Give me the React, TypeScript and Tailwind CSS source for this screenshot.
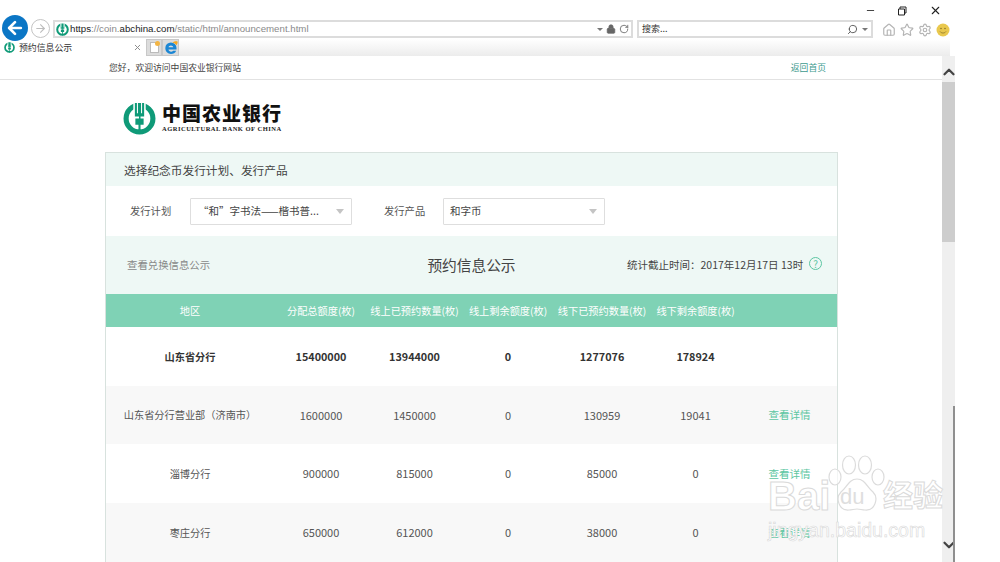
import React from "react";
import { ArrowLeft, ArrowRight, ChevronDown, ChevronUp, Home, Lock, RotateCw, Search, Settings, Star, X, Minus } from "lucide-react";

const rows = [
  { name: "山东省分行", total: "15400000", onDone: "13944000", onLeft: "0", offDone: "1277076", offLeft: "178924", bold: true },
  { name: "山东省分行营业部（济南市）", total: "1600000", onDone: "1450000", onLeft: "0", offDone: "130959", offLeft: "19041" },
  { name: "淄博分行", total: "900000", onDone: "815000", onLeft: "0", offDone: "85000", offLeft: "0" },
  { name: "枣庄分行", total: "650000", onDone: "612000", onLeft: "0", offDone: "38000", offLeft: "0" },
];

const headers = ["分配总额度(枚)", "线上已预约数量(枚)", "线上剩余额度(枚)", "线下已预约数量(枚)", "线下剩余额度(枚)"];

// ring with a white notch at the top, grain stalk in the middle
function AbcLogo({ size }: { size: number }) {
  return (
    <svg width={size} height={size} viewBox="0 0 32 32" className="shrink-0">
      <circle cx="16" cy="16" r="13" fill="none" stroke="#0f9a78" strokeWidth="5" />
      <rect x="10" y="0" width="12" height="9" fill="#fff" />
      <path d="M11.5 1h2v10h1V1h3v10h1V1h2v13h-3.500v2H20v6h-3v9h-2v-9h-3v-6h3.500v-2h-4z" fill="#0f9a78" />
    </svg>
  );
}

function IeLogo() {
  return (
    <svg width="14" height="14" viewBox="0 0 16 16">
      <path d="M1.500 9.800h12.800V8A6.300 6.300 0 0 0 1.500 8c0 4.200 3 6.800 6.500 6.800 2.700 0 4.900-1.300 5.900-3.700h-3.500c-.5.800-1.300 1.200-2.300 1.200-1.500 0-2.800-1-3-2.500zM5.200 7.200C5.400 5.800 6.500 5 7.900 5s2.500.8 2.700 2.200z" fill="#1b86d4" fillRule="evenodd" />
      <path d="M9.500 1.700c2.300-1.500 5.200-2 5.900-1 .5.900-.1 2.700-1.200 4.200-.7-1.400-2.500-2.700-4.700-3.200z" fill="#f5a823" />
    </svg>
  );
}

function BrowserChrome() {
  return (
    <div className="h-[56px] shrink-0 flex flex-col bg-white">
      <div className="h-[39px] relative flex items-end pl-[2px]">
        <div className="w-[26px] h-[26px] rounded-full bg-[#0b76c5] flex items-center justify-center -mb-[2px] z-10 shrink-0">
          <ArrowLeft size={20} strokeWidth={3.2} color="#fff" />
        </div>
        <div className="w-[19px] h-[19px] rounded-full border border-[#c4c4c4] flex items-center justify-center ml-[3px] mb-[1px] shrink-0">
          <ArrowRight size={13} color="#bdbdbd" />
        </div>
        <div className="w-[580px] h-[18px] ml-[3px] mb-[1px] border-2 border-[#dcdcdc] flex items-center pl-[1px] pr-[2px]">
          <AbcLogo size={13} />
          <span className="ml-[1px] text-[9.7px] text-[#8a8a8a] flex-1 font-['Liberation_Sans',sans-serif]">
            <span className="text-[#222]">https</span>://coin.<span className="text-[#222]">abchina.com</span>/static/html/announcement.html
          </span>
          <span className="w-0 h-0 border-x-[3px] border-x-transparent border-t-[3px] border-t-[#777] mr-[3px]" />
          <Lock size={10} color="#666" fill="#666" className="mr-[3px]" />
          <RotateCw size={10} color="#666" />
        </div>
        <div className="w-[236px] h-[18px] ml-[4px] mb-[1px] border-2 border-[#dcdcdc] flex items-center pl-[3px] pr-[3px]">
          <span className="flex-1 text-[9px] text-[#333]">搜索...</span>
          <Search size={11} color="#555" className="-scale-x-100" />
          <span className="w-0 h-0 border-x-[3px] border-x-transparent border-t-[3px] border-t-[#777] ml-[4px]" />
        </div>
        <div className="flex items-center gap-[4px] ml-[9px] mb-[2px]">
          <Home size={14} color="#b4b4b4" />
          <Star size={14} color="#b4b4b4" />
          <Settings size={14} color="#b4b4b4" />
          <svg width="14" height="14" viewBox="0 0 14 14">
            <circle cx="7" cy="7" r="6.500" fill="#e9c84e" />
            <circle cx="5" cy="5.500" r="0.800" fill="#8a7428" />
            <circle cx="9" cy="5.500" r="0.800" fill="#8a7428" />
            <path d="M4 8.500c1.500 2 4.500 2 6 0" fill="none" stroke="#8a7428" strokeWidth="0.800" />
          </svg>
        </div>
        <div className="absolute top-[4px] left-[865px] flex items-center">
          <Minus size={11} color="#333" />
          <svg width="10" height="10" viewBox="0 0 10 10" className="ml-[21px]">
            <path d="M1.500 3h6v6h-6zM3 3V1h6v6H7.500" fill="none" stroke="#222" strokeWidth="1" />
          </svg>
          <X size={13} color="#222" className="ml-[22px]" />
        </div>
      </div>
      <div className="h-[17px] flex bg-gradient-to-b from-white to-[#ececec] w-[950px]">
        <div className="w-[146px] bg-white flex items-center pl-[4px]">
          <AbcLogo size={11} />
          <span className="ml-[4px] text-[8.9px] text-[#333] flex-1">预约信息公示</span>
          <X size={9} color="#888" className="mr-[4px]" strokeWidth={2.5} />
        </div>
        <div className="w-[16px] bg-[#dcdcdc] border border-[#c8c8c8] flex items-center justify-center relative">
          <div className="w-[9px] h-[11px] bg-white border border-[#bbb]" />
          <span className="absolute top-[1px] right-[1px] w-[5px] h-[5px] rounded-full bg-[#f3b544]" />
        </div>
        <div className="w-[17px] bg-[#dcdcdc] border border-[#c8c8c8] flex items-center justify-center">
          <IeLogo />
        </div>
      </div>
    </div>
  );
}

function Select({ label, value, padding, labelWidth }: { label: string; value: string; padding: string; labelWidth: string }) {
  return (
    <div className="flex items-center">
      <span className={`${labelWidth} text-[10.3px] text-[#555]`}>{label}</span>
      <div className={`w-[162px] h-[27px] border border-[#dedede] rounded-[1px] flex items-center justify-between pr-[7px] ${padding}`}>
        <span className="text-[10.5px] text-[#444]">{value}</span>
        <span className="w-0 h-0 border-x-[4.5px] border-x-transparent border-t-[5px] border-t-[#c4c4c4]" />
      </div>
    </div>
  );
}

function Table() {
  return (
    <table className="w-full table-fixed border-collapse">
      <colgroup>
        <col className="w-[168px]" />
        <col className="w-[94px]" />
        <col className="w-[93px]" />
        <col className="w-[94px]" />
        <col className="w-[94px]" />
        <col className="w-[93px]" />
        <col />
      </colgroup>
      <thead>
        <tr className="h-[33px] bg-[#7fd2b5] text-white text-[10.2px]">
          <th className="font-normal">地区</th>
          {headers.map((h) => (
            <th key={h} className="font-normal whitespace-nowrap">{h}</th>
          ))}
          <th />
        </tr>
      </thead>
      <tbody>
        {rows.map((r, i) => {
          const num = r.bold ? "text-[10.8px]" : "text-[11px]";
          return (
            <tr key={r.name} className={`${i === 1 ? "h-[58px]" : "h-[59px]"} ${i % 2 === 1 ? "bg-[#f8f8f8]" : "bg-white"} ${r.bold ? "font-bold text-[#333]" : "text-[#555]"} text-center`}>
              <td className="whitespace-nowrap text-[10.2px]">{r.name}</td>
              <td className={num}>{r.total}</td>
              <td className={num}>{r.onDone}</td>
              <td className={num}>{r.onLeft}</td>
              <td className={num}>{r.offDone}</td>
              <td className={num}>{r.offLeft}</td>
              <td className="text-[10.5px] text-[#5cc6a2] font-normal">{r.bold ? "" : "查看详情"}</td>
            </tr>
          );
        })}
      </tbody>
    </table>
  );
}

function Watermark() {
  return (
    <div className="absolute left-[766px] top-[455px] w-[190px] h-[107px] text-white pointer-events-none">
      <svg width="60" height="62" viewBox="0 0 60 62" className="absolute left-[62px] top-0">
        <g stroke="#dcdcdc" strokeWidth="1.2" fill="#fff" fillOpacity="0.7">
          <ellipse cx="7" cy="22" rx="6" ry="8" />
          <ellipse cx="21" cy="10" rx="6.5" ry="9" />
          <ellipse cx="37" cy="10" rx="6.5" ry="9" />
          <ellipse cx="50" cy="22" rx="6" ry="8" />
          <path d="M29 24c8 0 10 8 16 13 6 6 2 19-8 18-3 0-5-1-8-1s-5 1-8 1c-10 1-14-12-8-18 6-5 8-13 16-13z" />
        </g>
      </svg>
      <span className="absolute left-[2px] top-[21px] text-[40px] leading-[40px] font-bold font-['Liberation_Sans'] [-webkit-text-stroke:1px_#dadada]">Bai</span>
      <span className="absolute left-[74px] top-[31px] text-[22px] leading-[22px] font-['Liberation_Sans'] text-[#dedede]">du</span>
      <span className="absolute left-[117px] top-[21px] text-[30px] leading-[34px] font-bold [-webkit-text-stroke:1px_#dadada]">经验</span>
      <span className="absolute left-[2px] top-[63px] text-[19.5px] leading-[24px] font-['Liberation_Sans'] [-webkit-text-stroke:0.6px_#d8d8d8] whitespace-nowrap">jingyan.baidu.com</span>
    </div>
  );
}

export default function App() {
  return (
    <div className="relative w-[1000px] h-[562px] overflow-hidden bg-white flex flex-col font-['Noto_Sans_CJK_SC','Noto_Sans',sans-serif]">
      <BrowserChrome />
      <div className="flex flex-1 min-h-0">
        <div className="w-[942px] flex flex-col min-h-0">
          <div className="h-[24px] shrink-0 border-b border-[#e2e2e2] flex items-center justify-between pl-[109px] pr-[116px] pt-[1px] text-[8.8px]">
            <span className="text-[#444]">您好，欢迎访问中国农业银行网站</span>
            <span className="text-[#3c9a8e]">返回首页</span>
          </div>
          <div className="h-[72px] shrink-0 flex items-center pl-[123px] pt-[4px]">
            <AbcLogo size={33} />
            <div className="ml-[6px] flex flex-col">
              <span className="text-[19px] leading-[21px] font-black text-[#111] tracking-[1px]">中国农业银行</span>
              <span className="text-[6.5px] leading-[12px] font-bold text-[#222] font-['Liberation_Serif',serif] tracking-[0.5px] whitespace-nowrap">AGRICULTURAL BANK OF CHINA</span>
            </div>
          </div>
          <div className="ml-[105px] w-[733px] flex-1 min-h-0 border-x border-t border-[#d8e2de]">
            <div className="h-[33px] bg-[#eef8f5] flex items-center pl-[18px] text-[11.7px] text-[#444]">
              选择纪念币发行计划、发行产品
            </div>
            <div className="h-[50px] flex items-center pl-[24px] gap-[32px]">
              <Select label="发行计划" value="“和”字书法——楷书普..." padding="pl-[7px]" labelWidth="w-[60px]" />
              <Select label="发行产品" value="和字币" padding="pl-[6px]" labelWidth="w-[59px]" />
            </div>
            <div className="h-[58px] bg-[#eef8f5] relative flex items-center justify-center">
              <span className="absolute left-[21px] top-[21px] text-[10.4px] text-[#888]">查看兑换信息公示</span>
              <span className="text-[14.7px] text-[#444]">预约信息公示</span>
              <div className="absolute left-[521px] top-[21px] flex items-center text-[10.5px] text-[#444]">
                <span>统计截止时间：2017年12月17日 13时</span>
                <span className="ml-[6px] -mt-[2px] w-[13px] h-[13px] rounded-full border border-[#5cc6a2] text-[#5cc6a2] text-[10px] leading-none flex items-center justify-center">?</span>
              </div>
            </div>
            <Table />
          </div>
        </div>
        <div className="w-[13px] bg-[#efefef] flex flex-col items-center relative shrink-0">
          <ChevronUp size={18} strokeWidth={3} color="#444" className="mt-[7px] shrink-0" />
          <div className="w-full h-[160px] bg-[#cdcdcd] mt-[1px]" />
          <div className="flex-1" />
          <ChevronDown size={18} strokeWidth={3} color="#444" className="mb-[8px] shrink-0" />
          <div className="absolute right-0 top-[350px] bottom-0 w-[2px] bg-[#8f8f8f]" />
        </div>
        <div className="flex-1 bg-white" />
      </div>
      <Watermark />
    </div>
  );
}
